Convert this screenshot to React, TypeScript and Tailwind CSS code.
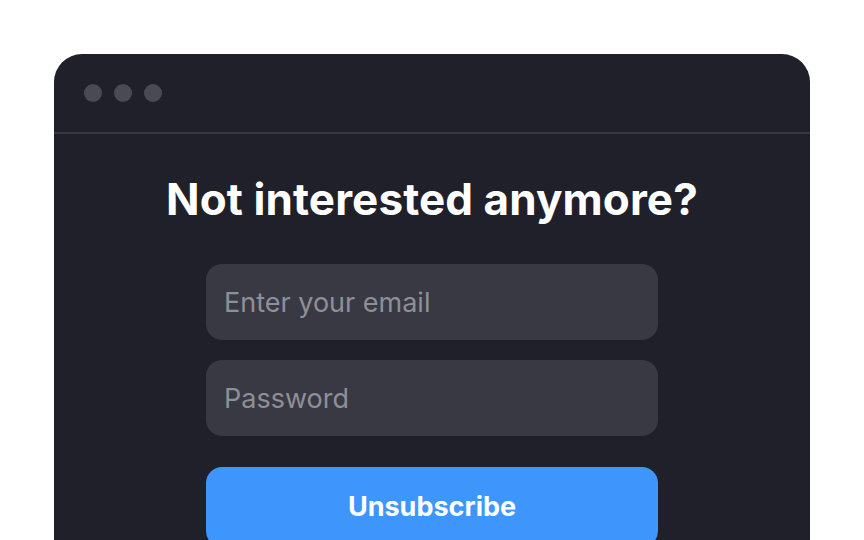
export default function App() {
  return (
    <div className="w-[864px] h-[540px] bg-white overflow-hidden pt-[54px] pl-[54px]">
      <div className="w-[756px] h-[560px] bg-[#20202a] rounded-t-[28px] flex flex-col">
        <div className="h-[80px] shrink-0 flex items-center gap-3 px-[30px] border-b-2 border-[#383843]">
          <span className="w-[18px] h-[18px] rounded-full bg-[#4a4a55]" />
          <span className="w-[18px] h-[18px] rounded-full bg-[#4a4a55]" />
          <span className="w-[18px] h-[18px] rounded-full bg-[#4a4a55]" />
        </div>
        <div className="flex flex-col items-center pt-[37px]">
          <h1
            className="text-white text-[44px] leading-[56px] font-bold tracking-[0.1px]"
            style={{ fontFamily: "Inter, 'Noto Sans', sans-serif" }}
          >
            Not interested anymore?
          </h1>
          <form className="mt-[37px] w-[452px] flex flex-col" style={{ fontFamily: "Inter, sans-serif" }}>
            <input
              type="email"
              placeholder="Enter your email"
              className="h-[76px] shrink-0 rounded-[16px] bg-[#393943] px-[18px] text-[27px] text-white placeholder:text-[#8f8f98] outline-none"
            />
            <input
              type="password"
              placeholder="Password"
              className="mt-[20px] h-[76px] shrink-0 rounded-[16px] bg-[#393943] px-[18px] text-[27px] text-white placeholder:text-[#8f8f98] outline-none"
            />
            <button
              type="button"
              className="mt-[31px] h-[80px] shrink-0 rounded-[16px] bg-[#3e96fd] text-white text-[27px] font-bold"
            >
              Unsubscribe
            </button>
          </form>
        </div>
      </div>
    </div>
  );
}
